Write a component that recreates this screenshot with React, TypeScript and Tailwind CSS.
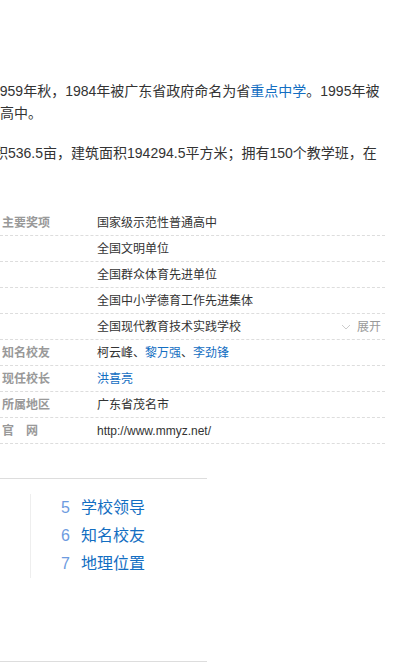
const cjk = "font-['Liberation_Sans','Noto_Sans_CJK_SC',sans-serif]"

const rows: { label: string; value: React.ReactNode; more?: boolean }[] = [
  { label: '主要奖项', value: '国家级示范性普通高中' },
  { label: '', value: '全国文明单位' },
  { label: '', value: '全国群众体育先进单位' },
  { label: '', value: '全国中小学德育工作先进集体' },
  { label: '', value: '全国现代教育技术实践学校', more: true },
  {
    label: '知名校友',
    value: (
      <>
        柯云峰、<a className="text-[#136ec2]">黎万强</a>、<a className="text-[#136ec2]">李劲锋</a>
      </>
    ),
  },
  { label: '现任校长', value: <a className="text-[#136ec2]">洪喜亮</a> },
  { label: '所属地区', value: '广东省茂名市' },
  { label: '官　网', value: 'http://www.mmyz.net/' },
]

const catalog = [
  { n: 5, t: '学校领导' },
  { n: 6, t: '知名校友' },
  { n: 7, t: '地理位置' },
]

export default function App() {
  return (
    <div className={`w-[406px] h-[667px] overflow-hidden bg-white text-[#333] ${cjk}`}>
      <div className="pt-[80px] text-[14px] leading-[22px]">
        <div className="whitespace-nowrap -ml-[8px]">
          1959年秋，1984年被广东省政府命名为省<a className="text-[#136ec2]">重点中学</a>。1995年被
        </div>
        <div className="whitespace-nowrap">高中。</div>
        <div className="whitespace-nowrap -ml-[6px] mt-[18px]">
          积536.5亩，建筑面积194294.5平方米；拥有150个教学班，在
        </div>
      </div>

      <div className="mt-[46px] w-[385px] text-[12px]">
        {rows.map((r, i) => (
          <div key={i} className="flex items-center h-[26px] border-b border-dashed border-[#ddd]">
            <div className="w-[97px] pl-[2px] font-bold text-[#999] whitespace-pre">{r.label}</div>
            <div className="flex-1">{r.value}</div>
            {r.more && (
              <div className="flex items-center gap-[6px] pr-[4px] text-[#999]">
                <svg width="10" height="6" viewBox="0 0 10 6" fill="none" stroke="#ccc" strokeWidth="1">
                  <path d="M1 1l4 4 4-4" />
                </svg>
                <span>展开</span>
              </div>
            )}
          </div>
        ))}
      </div>

      <div className="mt-[34px] w-[207px] border-t border-[#ddd]">
        <div className="ml-[30px] mt-[15px] border-l border-[#eee] pl-[30px] text-[16px]">
          {catalog.map(c => (
            <div key={c.n} className="flex items-center h-[28px]">
              <span className="w-[20px] text-[#6d9be0]">{c.n}</span>
              <a className="text-[#136ec2]">{c.t}</a>
            </div>
          ))}
        </div>
      </div>

      <div className="mt-[83px] w-[207px] border-t border-[#ddd]" />
    </div>
  )
}
